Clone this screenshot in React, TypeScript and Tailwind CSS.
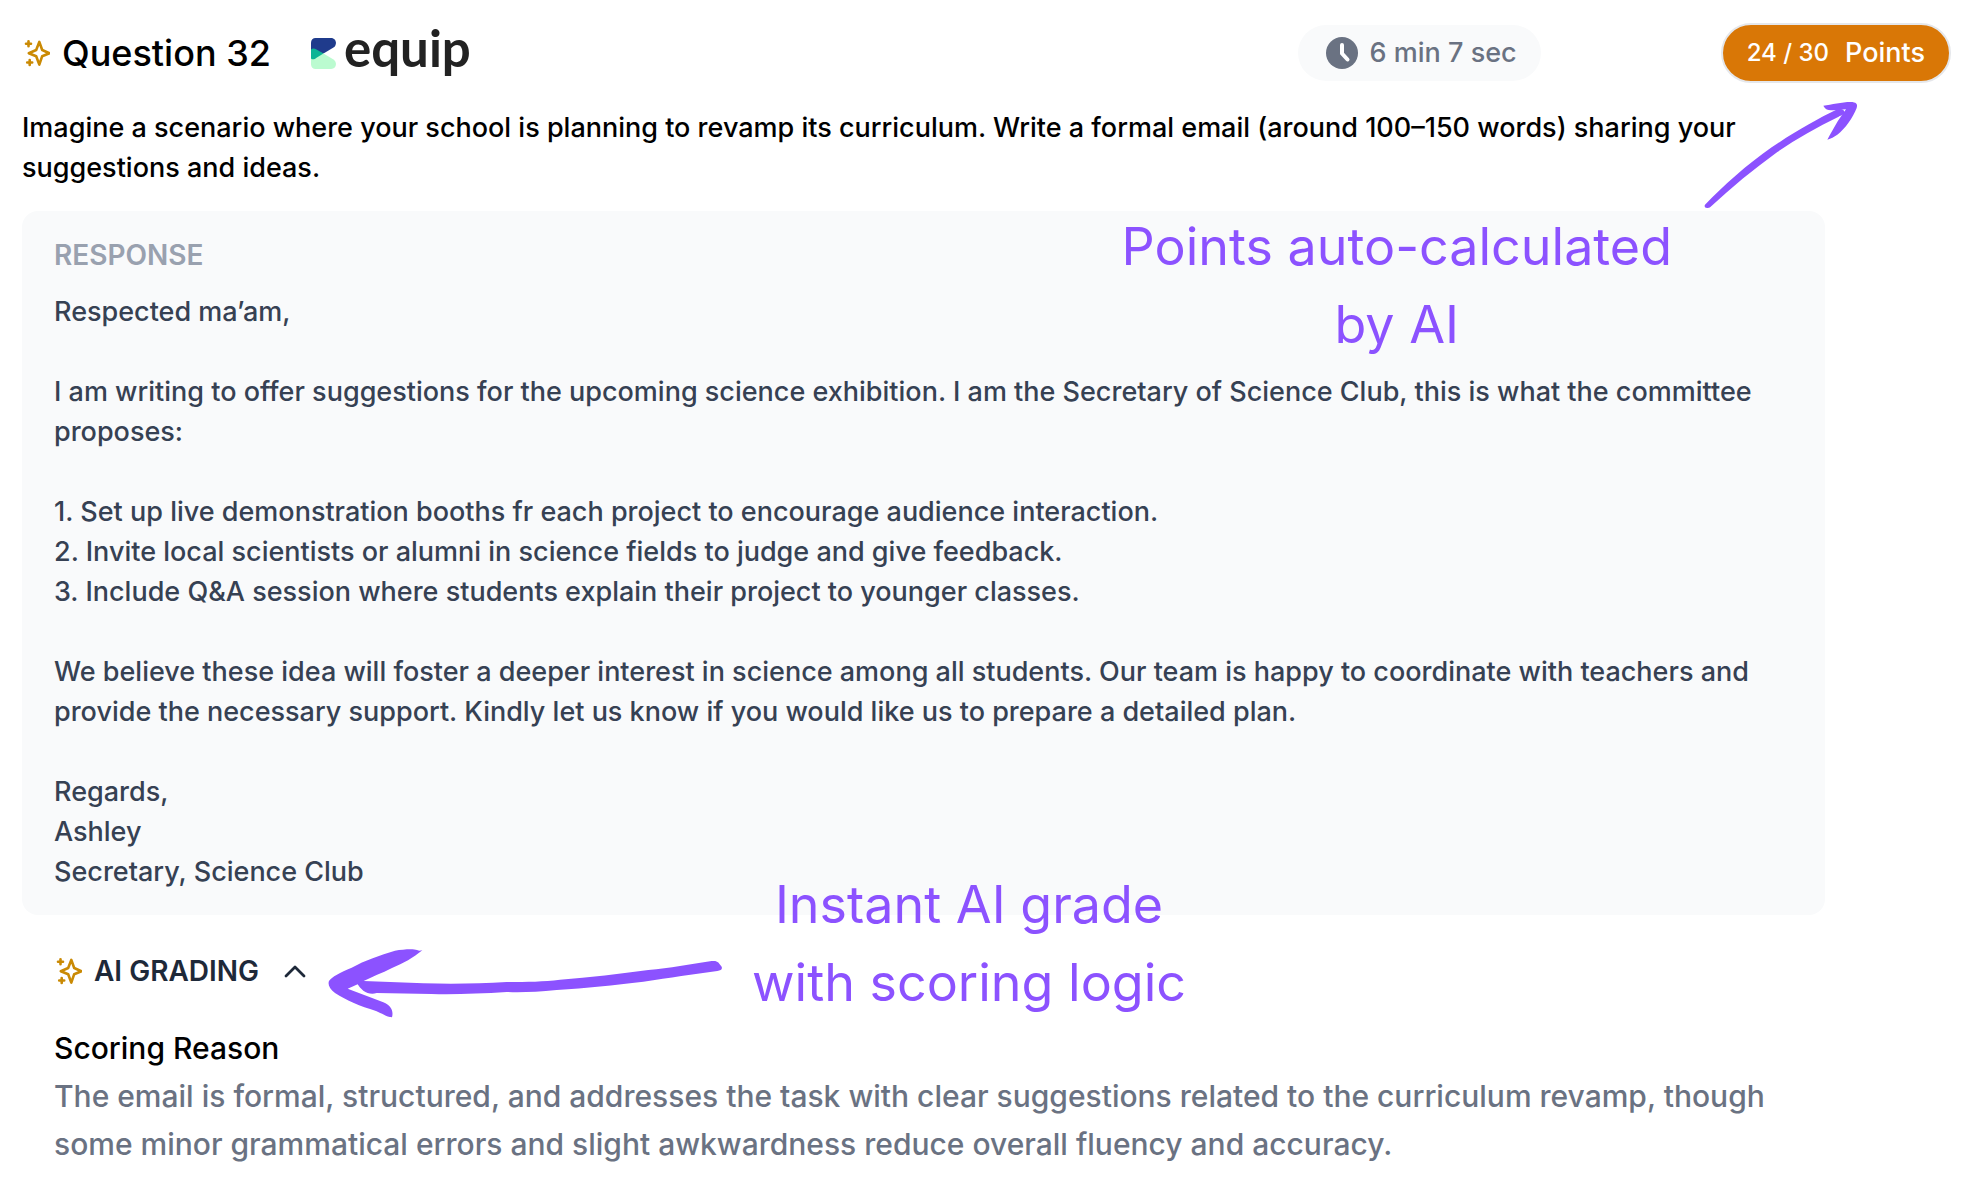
import { useState } from "react";

const PROMPT =
    "Imagine a scenario where your school is planning to revamp its curriculum. Write a formal email (around 100–150 words) sharing your suggestions and ideas.";

const RESPONSE = [
    "Respected ma’am,",
    "I am writing to offer suggestions for the upcoming science exhibition. I am the Secretary of Science Club, this is what the committee proposes:",
    `1. Set up live demonstration booths fr each project to encourage audience interaction.
2. Invite local scientists or alumni in science fields to judge and give feedback.
3. Include Q&A session where students explain their project to younger classes.`,
    "We believe these idea will foster a deeper interest in science among all students. Our team is happy to coordinate with teachers and provide the necessary support. Kindly let us know if you would like us to prepare a detailed plan.",
    `Regards,
Ashley
Secretary, Science Club`,
];

const REASON =
    "The email is formal, structured, and addresses the task with clear suggestions related to the curriculum revamp, though some minor grammatical errors and slight awkwardness reduce overall fluency and accuracy.";

const Sparkles = () => (
    <svg
        viewBox="0 0 28 28"
        className="size-7 shrink-0 text-[#ca8a04]"
        fill="none"
        stroke="currentColor"
        strokeWidth="2.6"
        strokeLinejoin="round"
        strokeLinecap="round"
        aria-hidden="true"
    >
        <path d="M17.3 2.9 L20.2 11 L27.4 14.2 L20.2 17.2 L17.3 25.6 L14.2 17.2 L6.8 14.2 L14.2 11 Z" />
        <path d="M6.5 2.2v5M4 4.7h5M7.7 21v5M5.2 23.5h5" />
    </svg>
);

const Logo = () => (
    <div className="flex items-center gap-2">
        <svg viewBox="0 0 25 31" className="w-[25px] h-[31px]" aria-hidden="true">
            <path d="M4.5 0H20C25.5 0 26.5 7 22.5 9.5L12.5 15.5L0 12V4.5C0 2 2 0 4.5 0Z" fill="#1f3b8c" />
            <path d="M4.5 31H20C25.5 31 26.5 24 22.5 21.5L12.5 15.5L0 20V26.5C0 29 2 31 4.5 31Z" fill="#bbfbd0" />
            <path d="M0 11.5C1.5 10 3.5 10.3 5.5 11.4L12.5 15.5L5.5 19.8C3.5 21.4 1.5 22 0 20.5Z" fill="#0cb495" />
        </svg>
        <span className="pb-3 font-['Lato',sans-serif] font-bold text-[51px] leading-none text-[#222222]">equip</span>
    </div>
);

export default function App() {
    const [open, setOpen] = useState(true);

    return (
        <main className="relative bg-white px-[22px] pt-[23px] pb-3 font-['Inter',sans-serif] text-black">
            <header className="flex items-center h-[60px] pr-[11px]">
                <Sparkles />
                <h1 className="ml-3 text-4xl leading-10 font-medium">Question 32</h1>
                <div className="ml-10">
                    <Logo />
                </div>
                <div className="ml-auto flex items-center gap-3 h-14 pl-7 pr-6 rounded-full bg-gray-50 text-gray-500 text-[27px] font-[450]">
                    <svg viewBox="0 0 32 32" className="size-8" aria-hidden="true">
                        <circle cx="16" cy="16" r="16" fill="currentColor" />
                        <path d="M16 8v8.5l5.5 6" fill="none" stroke="white" strokeWidth="4" strokeLinecap="round" strokeLinejoin="round" />
                    </svg>
                    <span>6 min 7 sec</span>
                </div>
                <div className="ml-[180px] flex items-center gap-4 h-[60px] px-6 rounded-full border-2 border-gray-200 bg-[#d97706] text-white font-medium">
                    <span className="text-2xl">24 / 30</span>
                    <span className="text-[27px]">Points</span>
                </div>
            </header>

            <p className="mt-[25px] mr-[137px] text-[27px] leading-10 font-[450]">{PROMPT}</p>

            <section className="mt-[23px] mr-[137px] rounded-2xl bg-gray-50 px-8 pt-6 pb-[23px]">
                <h2 className="text-[28px] leading-10 font-semibold text-gray-400">RESPONSE</h2>
                <div className="mt-[17px] flex flex-col gap-10 text-[27px] leading-10 font-[450] text-gray-700">
                    {RESPONSE.map((text) => (
                        <p key={text} className="whitespace-pre-line">{text}</p>
                    ))}
                </div>
            </section>

            <section className="mt-9 mr-[137px] pl-8">
                <button
                    type="button"
                    className="flex items-center h-10 text-[28px] font-semibold text-gray-800"
                    aria-expanded={open}
                    onClick={() => setOpen(!open)}
                >
                    <Sparkles />
                    <span className="ml-3">AI GRADING</span>
                    <svg viewBox="0 0 24 14" className="ml-6 w-6 h-3.5" fill="none" stroke="currentColor" strokeWidth="2.8" strokeLinecap="round" strokeLinejoin="round" aria-hidden="true">
                        <path d="M3 12 L12 3 L21 12" />
                    </svg>
                </button>
                {open && (
                    <div className="mt-[33px] text-[30px] leading-[48px] font-[450]">
                        <h3>Scoring Reason</h3>
                        <p className="text-gray-500">{REASON}</p>
                    </div>
                )}
            </section>

            {/* annotations on top of the card */}
            <div className="absolute inset-0 pointer-events-none text-[#8c52ff] text-center text-[52px] leading-[78px]">
                <div className="absolute top-[208px] right-[312px]">
                    Points auto-calculated
                    <br />
                    by AI
                </div>
                <svg viewBox="0 0 510 360" className="absolute top-[90px] right-[114px] w-[170px] h-[120px]" fill="currentColor" aria-hidden="true">
                    <path d="M15 344 C70 288 140 224 215 172 C290 122 350 88 412 58 C424 54 434 60 434 67 C434 74 424 76 416 80 C350 112 290 146 232 186 C160 238 95 292 32 350 C22 358 10 354 15 344Z" />
                    <path d="M370 47 C395 44 425 36 452 36 C468 36 474 42 470 54 C458 84 436 116 412 134 C402 141 393 145 382 149 C392 130 402 112 414 92 L438 58 C420 60 400 62 386 60 C377 58 374 53 370 47Z" />
                </svg>
                <div className="absolute top-[866px] left-[752px]">
                    Instant AI grade
                    <br />
                    with scoring logic
                </div>
                <svg viewBox="0 0 1350 300" className="absolute top-[930px] left-[280px] w-[450px] h-[100px]" fill="currentColor" aria-hidden="true">
                    <path d="M427 61 C400 84 370 100 336 114 C305 130 276 140 251 153 L430 160 C520 162 600 161 680 156 C740 156 790 155 840 149 C930 142 1020 132 1105 120 C1170 115 1230 102 1295 93 C1314 91 1316 98 1325 110 C1328 118 1322 121 1312 123 C1240 132 1170 144 1090 155 C1000 166 920 174 830 180 C770 186 720 188 680 186 C600 191 520 194 455 192 L290 189 C275 194 262 190 250 182 C239 173 237 168 233 163 L203 176 L310 217 C334 227 341 244 336 262 C318 260 306 250 288 243 C240 228 200 212 165 189 C148 176 143 163 147 153 C155 140 180 128 215 113 C255 91 300 75 345 62 C370 58 400 56 411 60 C417 63 421 62 427 61Z" />
                </svg>
            </div>
        </main>
    );
}
